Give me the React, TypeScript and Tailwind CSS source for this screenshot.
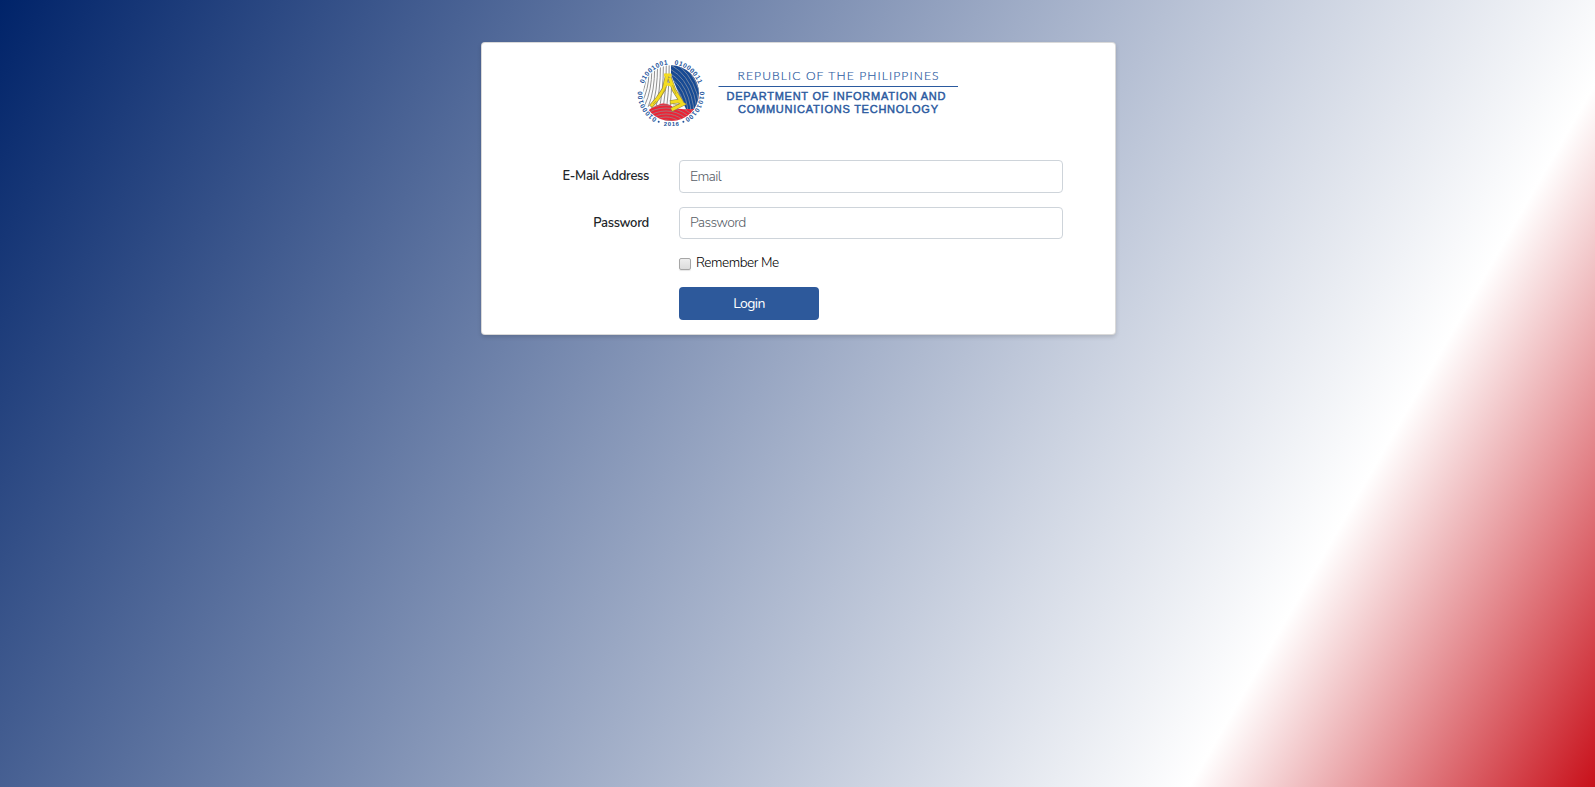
import React from "react";

const rings = Array.from({ length: 16 }, (_, i) => 6 + i * 3);

function Arc({ text }: { text: string }) {
  return (
    <>
      {text.split("").map((c, i) => (
        <text key={i} x="41" y="12.4" transform={`rotate(${(i - 3.5) * 8.2} 41 41.2)`}>{c}</text>
      ))}
    </>
  );
}

function Seal() {
  return (
    <svg viewBox="0 0 82 82" className="h-[82px] w-[82px] shrink-0">
      <defs>
        <clipPath id="disc"><circle cx="41" cy="41.2" r="27.9" /></clipPath>
        <clipPath id="blue"><path d="M41 10H72V60L56 57L50 44L44 30L41 22Z" /></clipPath>
        <clipPath id="red"><path d="M10 66Q20 55 32 51.5Q38 51 43 55Q50 58 58 57L72 57V72H10Z" /></clipPath>
      </defs>
      <g clipPath="url(#disc)">
        <rect width="82" height="82" fill="#fbfbfb" />
        <g fill="none" stroke="#858585" strokeWidth="0.9">
          {[0, 1, 2, 3, 4, 5, 6, 7, 8, 9].map((i) => (
            <path key={i} d={`M${16 + i * 2.9} ${i < 4 ? 24 - i * 3 : 12}Q${16 + i * 2.9} ${36 + i} ${8 + i * 3.4} ${50 + i * 1.6}`} />
          ))}
        </g>
        <g clipPath="url(#blue)">
          <rect x="38" y="8" width="36" height="56" fill="#174a94" />
          <g fill="none" stroke="#8592a8" strokeWidth="0.8">
            {rings.map((r) => <ellipse key={r} cx="28" cy="63" rx={r} ry={r * 1.35} />)}
          </g>
        </g>
        <g clipPath="url(#red)">
          <rect x="10" y="50" width="64" height="22" fill="#ec2436" />
          <g fill="none" stroke="#a07a80" strokeWidth="0.9">
            {rings.map((r) => <ellipse key={r} cx="36" cy="80" rx={r * 1.25} ry={r} />)}
          </g>
        </g>
        <g fill="none" stroke="#8f8550" strokeWidth="4.2" strokeLinecap="square">
          <path d="M37 24L34 37L28 46L22 53" />
          <path d="M40 27L44 38L51 49" />
          <path d="M42 50L49 49L53 52L43 57" />
        </g>
        <g fill="none" stroke="#f4dc20" strokeWidth="3" strokeLinecap="square">
          <path d="M37 24L34 37L28 46L22 53" />
          <path d="M40 27L44 38L51 49" />
          <path d="M42 50L49 49L53 52L43 57" />
          <path d="M35.5 23H40M36 32L42 33" />
        </g>
        <path d="M36 35L31 45M42.5 33L46 42M43 53L49 52M26 49L23 52" fill="none" stroke="#9a8d3c" strokeWidth="0.6" />
      </g>
      <g fill="#22539c" fontFamily="Liberation Sans" fontSize="6.6" className="font-bold" textAnchor="middle">
        <g transform="rotate(-38.5 41 41.2)"><Arc text="01001001" /></g>
        <g transform="rotate(39 41 41.2)"><Arc text="01000011" /></g>
        <g transform="rotate(119 41 41.2)"><Arc text="01010100" /></g>
        <g transform="rotate(-118.5 41 41.2)"><Arc text="01000100" /></g>
        <text x="41.7" y="74.4" fontSize="6" letterSpacing="0.6">2016</text>
        <circle cx="28.7" cy="69.7" r="1" /><circle cx="53.4" cy="69.7" r="1" />
      </g>
    </svg>
  );
}

function Wordmark() {
  return (
    <svg viewBox="0 0 260 66" className="mt-2 h-[66px] w-[260px] shrink-0" fill="#2b5a9f">
      <text x="27.5" y="20.3" fontFamily="Lato" fontWeight="300" fontSize="12.1" stroke="#2b5a9f" strokeWidth="0.2" textLength="201" lengthAdjust="spacing">REPUBLIC OF THE PHILIPPINES</text>
      <rect x="8.5" y="26" width="239.5" height="1" />
      <g fontFamily="Liberation Sans" fontSize="11" stroke="#2b5a9f" strokeWidth="0.45">
        <text x="16.5" y="40.3" textLength="219" lengthAdjust="spacing">DEPARTMENT OF INFORMATION AND</text>
        <text x="28" y="53.3" textLength="200" lengthAdjust="spacing">COMMUNICATIONS TECHNOLOGY</text>
      </g>
    </svg>
  );
}

const fieldClass =
  "block w-96 rounded-[4px] border border-[#ced4da] bg-white px-[10px] pb-[1px] text-[14px] font-light tracking-[-0.65px] text-[#495057] outline-none placeholder:text-[#586068] placeholder:opacity-100";

export default function App() {
  return (
    <main className="flex min-h-screen justify-center bg-[linear-gradient(120deg,#002369_0%,#ffffff_80.2%,#c8101a_100%)] pt-[42px] font-['Nunito','Open_Sans',sans-serif] text-[14.4px] text-[#212529]">
      <section className="ml-[2px] h-[293px] w-[635px] rounded-[4px] border border-black/15 bg-white shadow-[0_2px_4px_rgba(0,0,0,0.15)]">
        <header className="ml-[148px] mt-[9px] flex h-[82px]">
          <Seal />
          <div className="-ml-[2px]"><Wordmark /></div>
        </header>
        <form className="mt-[26px] flex flex-col" onSubmit={(e) => e.preventDefault()}>
          <div className="flex">
            <label htmlFor="email" className="mr-[30px] w-[167px] pt-[5px] text-right text-[13px] font-semibold leading-[22px] tracking-[-0.33px]">E-Mail Address</label>
            <input id="email" type="email" placeholder="Email" className={`${fieldClass} h-[33px]`} />
          </div>
          <div className="mt-[14px] flex">
            <label htmlFor="password" className="mr-[30px] w-[167px] pt-[5px] text-right text-[13px] font-semibold leading-[22px] tracking-[-0.3px]">Password</label>
            <input id="password" type="password" placeholder="Password" className={`${fieldClass} h-8`} />
          </div>
          <div className="ml-[197px] mt-[12px] flex h-6 items-center">
            <input id="remember" type="checkbox" className="mt-[2px] h-3 w-3 appearance-none rounded-[2px] border border-[#a6a6a6] bg-linear-to-b from-[#eeeeee] to-[#dcdcdc] shadow-[0_1px_1px_#0000001a]" />
            <label htmlFor="remember" className="ml-[5px] text-[13.5px] font-light tracking-[-0.42px] text-black">Remember Me</label>
          </div>
          <button type="submit" className="ml-[197px] mt-[12px] h-[33px] w-[140px] rounded-[4px] bg-[#2d599b] text-[14px] tracking-[-0.6px] text-white">Login</button>
        </form>
      </section>
    </main>
  );
}
